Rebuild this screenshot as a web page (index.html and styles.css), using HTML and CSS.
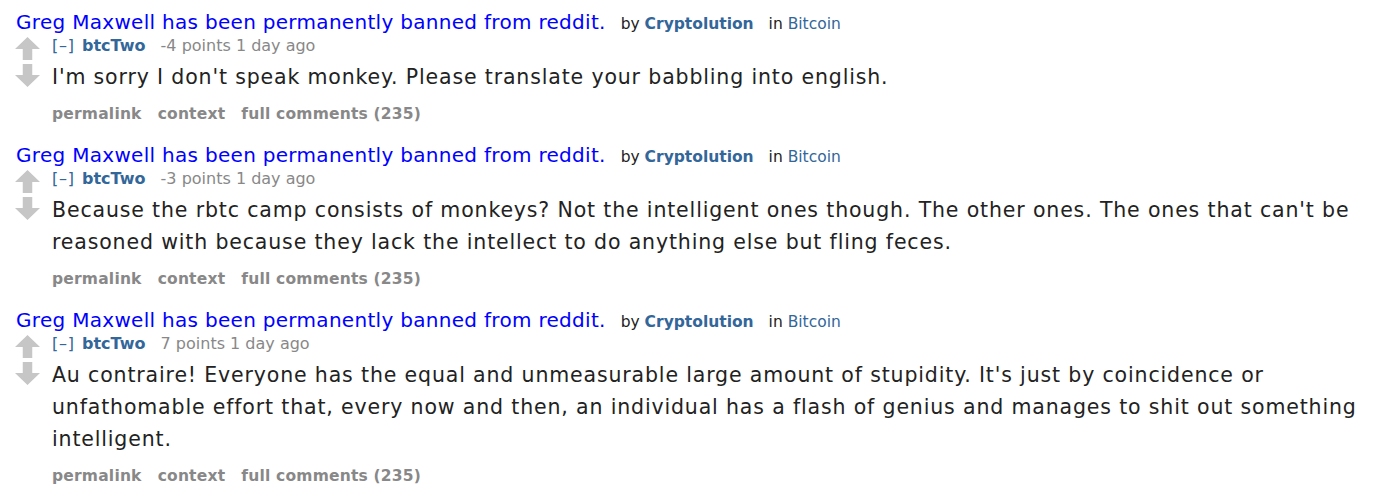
FILE: index.html
```html
<!DOCTYPE html>
<html lang="en">
<head>
  <meta charset="UTF-8" />
  <title>btcTwo comments</title>
  <link rel="stylesheet" href="styles.css">
</head>
<body>
  <div class="listing">

    <!-- Comment 1 -->
    <div class="thing">
      <p class="parent">
        <a class="title" href="#">Greg Maxwell has been permanently banned from reddit.</a>
        <span class="by">by <a class="author" href="#">Cryptolution</a></span>
        <span class="in">in <a class="sub" href="#">Bitcoin</a></span>
      </p>
      <div class="comment">
        <div class="midcol">
          <span class="arrow up"></span>
          <span class="arrow down"></span>
        </div>
        <div class="entry">
          <p class="tagline"><a class="expand" href="#">[–]</a> <a class="author" href="#">btcTwo</a> <span class="score">-4 points</span> <span class="time">1 day ago</span></p>
          <div class="md"><p>I'm sorry I don't speak monkey. Please translate your babbling into english.</p></div>
          <ul class="buttons">
            <li><a href="#">permalink</a></li>
            <li><a href="#">context</a></li>
            <li><a href="#">full comments (235)</a></li>
          </ul>
        </div>
      </div>
    </div>

    <!-- Comment 2 -->
    <div class="thing">
      <p class="parent">
        <a class="title" href="#">Greg Maxwell has been permanently banned from reddit.</a>
        <span class="by">by <a class="author" href="#">Cryptolution</a></span>
        <span class="in">in <a class="sub" href="#">Bitcoin</a></span>
      </p>
      <div class="comment">
        <div class="midcol">
          <span class="arrow up"></span>
          <span class="arrow down"></span>
        </div>
        <div class="entry">
          <p class="tagline"><a class="expand" href="#">[–]</a> <a class="author" href="#">btcTwo</a> <span class="score">-3 points</span> <span class="time">1 day ago</span></p>
          <div class="md"><p>Because the rbtc camp consists of monkeys? Not the intelligent ones though. The other ones. The ones that can't be reasoned with because they lack the intellect to do anything else but fling feces.</p></div>
          <ul class="buttons">
            <li><a href="#">permalink</a></li>
            <li><a href="#">context</a></li>
            <li><a href="#">full comments (235)</a></li>
          </ul>
        </div>
      </div>
    </div>

    <!-- Comment 3 -->
    <div class="thing">
      <p class="parent">
        <a class="title" href="#">Greg Maxwell has been permanently banned from reddit.</a>
        <span class="by">by <a class="author" href="#">Cryptolution</a></span>
        <span class="in">in <a class="sub" href="#">Bitcoin</a></span>
      </p>
      <div class="comment">
        <div class="midcol">
          <span class="arrow up"></span>
          <span class="arrow down"></span>
        </div>
        <div class="entry">
          <p class="tagline"><a class="expand" href="#">[–]</a> <a class="author" href="#">btcTwo</a> <span class="score">7 points</span> <span class="time">1 day ago</span></p>
          <div class="md"><p>Au contraire! Everyone has the equal and unmeasurable large amount of stupidity. It's just by coincidence or unfathomable effort that, every now and then, an individual has a flash of genius and manages to shit out something intelligent.</p></div>
          <ul class="buttons">
            <li><a href="#">permalink</a></li>
            <li><a href="#">context</a></li>
            <li><a href="#">full comments (235)</a></li>
          </ul>
        </div>
      </div>
    </div>

  </div>
</body>
</html>
```

FILE: styles.css
```css
/* Global styles */
body {
  margin: 0;
  background: #fff;
  color: #222;
  font-family: "DejaVu Sans", Verdana, sans-serif;
}
a {
  text-decoration: none;
}
p, ul {
  margin: 0;
  padding: 0;
}
.listing {
  padding: 11px 30px 0 16px;
}
.thing {
  margin-bottom: 20px;
}
/* Parent link line */
.parent {
  font-size: 15.5px;
  line-height: 22px;
  color: #222;
}
.parent .title {
  font-size: 20px;
  letter-spacing: 0.3px;
  color: #0000ff;
  margin-right: 10px;
}
.parent .by {
  margin-right: 10px;
}
.author {
  color: #369;
  font-weight: bold;
}
.sub {
  color: #369;
}
/* Comment */
.comment {
  display: flex;
}
.midcol {
  flex-shrink: 0;
  width: 36px;
  display: flex;
  flex-direction: column;
  gap: 4px;
  padding-top: 2px;
}
.arrow {
  display: block;
  width: 25px;
  height: 23px;
  margin-left: -1px;
  background: #c6c6c6;
}
.arrow.up {
  clip-path: polygon(50% 0, 100% 52%, 69% 52%, 69% 100%, 31% 100%, 31% 52%, 0 52%);
}
.arrow.down {
  clip-path: polygon(31% 0, 69% 0, 69% 48%, 100% 48%, 50% 100%, 0 48%, 31% 48%);
}
.entry {
  flex: 1;
}
.tagline {
  font-size: 16px;
  line-height: 22px;
  color: #888;
}
.tagline .expand {
  color: #369;
  letter-spacing: 0.8px;
  margin-right: 2px;
}
.tagline .author {
  margin-right: 10px;
}
.md {
  font-size: 20.5px;
  letter-spacing: 0.85px;
  line-height: 32px;
  color: #222;
  padding-top: 4px;
}
.buttons {
  list-style: none;
  display: flex;
  gap: 16px;
  padding-top: 11px;
  font-size: 15.5px;
  letter-spacing: 0.2px;
  line-height: 20px;
}
.buttons a {
  color: #888;
  font-weight: bold;
}
```
